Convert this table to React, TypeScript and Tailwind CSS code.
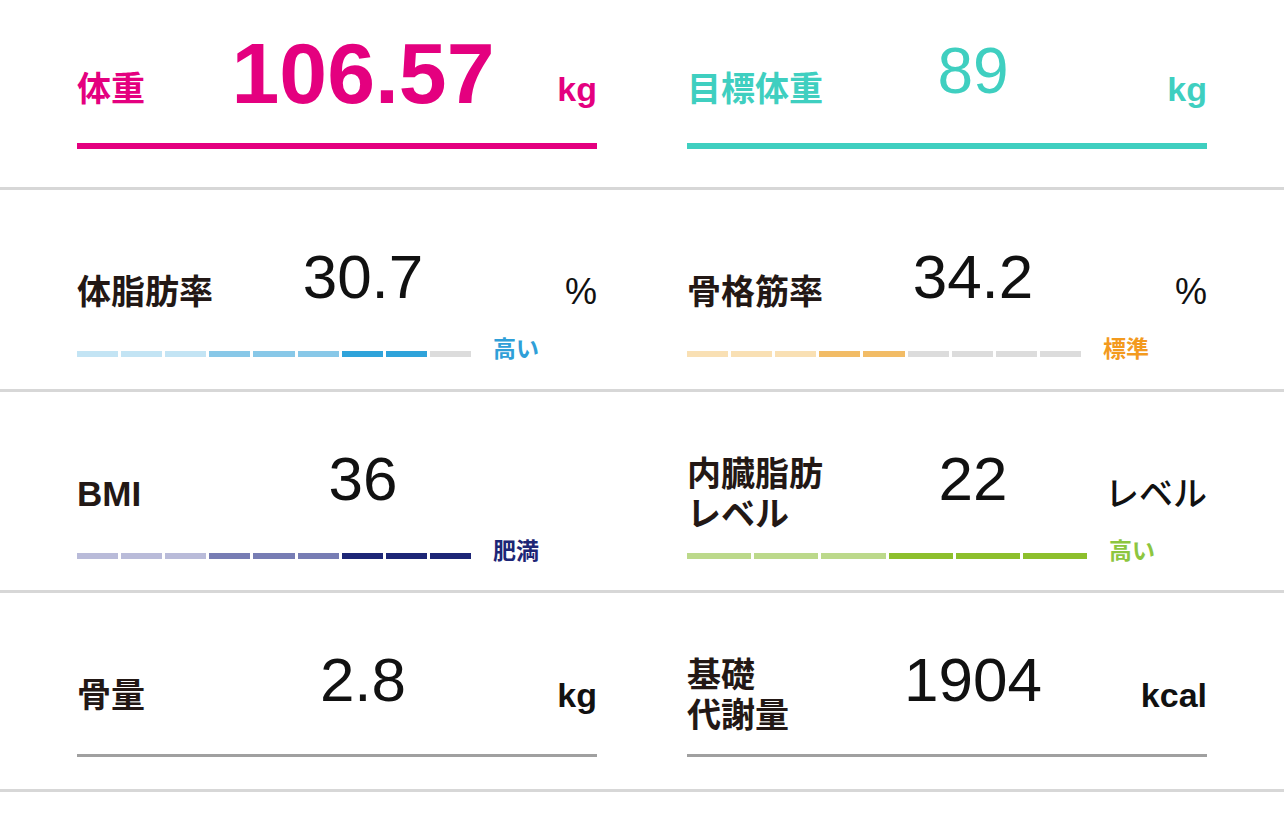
import React from "react"

type Seg = { color: string; n: number }

const LIGHT_GRAY = "bg-[#dcdcdc]"

const Header = ({
  label,
  value,
  unit,
  valueClass,
  labelClass = "text-[#231815]",
  unitClass = "text-[#111] font-bold",
}: {
  label: React.ReactNode
  value: string
  unit: string
  valueClass: string
  labelClass?: string
  unitClass?: string
}) => (
  <div className="grid grid-cols-[160px_minmax(0,1fr)_108px] items-center h-[80px]">
    <div className={`text-[34px] leading-[40px] font-bold whitespace-nowrap ${labelClass}`}>{label}</div>
    <div className={`flex justify-center leading-none whitespace-nowrap ${valueClass}`}>{value}</div>
    <div className={`text-right leading-none whitespace-nowrap ${unitClass}`}>{unit}</div>
  </div>
)

const SegBar = ({
  segs,
  width,
  status,
  statusColor,
}: {
  segs: Seg[]
  width: string
  status: string
  statusColor: string
}) => (
  <div className="mt-[11px] flex items-center gap-[22px] h-[22px]">
    <div className={`flex gap-[3px] h-[6px] ${width}`}>
      {segs.flatMap((s, i) =>
        Array.from({ length: s.n }).map((_, j) => (
          <div key={`${i}-${j}`} className={`flex-1 h-full ${s.color}`} />
        ))
      )}
    </div>
    <div className={`-mt-[10px] text-[23px] leading-none font-bold ${statusColor}`}>{status}</div>
  </div>
)

const Row = ({ h, children }: { h: string; children: React.ReactNode }) => (
  <div className={`${h} border-b-[3px] border-[#d7d7d7] px-[77px] grid grid-cols-2 gap-x-[90px]`}>
    {children}
  </div>
)

const VALUE = "-mt-[30px] text-[62px] text-[#111]"
const PCT = "text-[36px] text-[#111]"

export default function App() {
  return (
    <div className="w-[1284px] h-[823px] bg-white font-['Liberation_Sans','Noto_Sans_CJK_JP',sans-serif]">
      {/* 体重 / 目標体重 */}
      <Row h="h-[190px]">
        <div className="pt-[49px] flex flex-col">
          <Header
            label="体重"
            labelClass="text-[#e4007f]"
            value="106.57"
            valueClass="-mt-[32px] text-[86px] font-bold text-[#e4007f]"
            unit="kg"
            unitClass="text-[34px] font-bold text-[#e4007f]"
          />
          <div className="mt-[14px] h-[6px] bg-[#e4007f]" />
        </div>
        <div className="pt-[49px] flex flex-col">
          <Header
            label="目標体重"
            labelClass="text-[#3fcfc0]"
            value="89"
            valueClass="-mt-[37px] text-[64px] text-[#3fcfc0]"
            unit="kg"
            unitClass="text-[34px] font-bold text-[#3fcfc0]"
          />
          <div className="mt-[14px] h-[6px] bg-[#3fcfc0]" />
        </div>
      </Row>

      {/* 体脂肪率 / 骨格筋率 */}
      <Row h="h-[202px]">
        <div className="pt-[62px] flex flex-col">
          <Header label="体脂肪率" value="30.7" valueClass={VALUE} unit="%" unitClass={PCT} />
          <SegBar
            width="w-[394px]"
            segs={[
              { color: "bg-[#c3e4f4]", n: 3 },
              { color: "bg-[#88c8e8]", n: 3 },
              { color: "bg-[#2fa3da]", n: 2 },
              { color: LIGHT_GRAY, n: 1 },
            ]}
            status="高い"
            statusColor="text-[#2f9fd8]"
          />
        </div>
        <div className="pt-[62px] flex flex-col">
          <Header label="骨格筋率" value="34.2" valueClass={VALUE} unit="%" unitClass={PCT} />
          <SegBar
            width="w-[394px]"
            segs={[
              { color: "bg-[#f9e0b4]", n: 3 },
              { color: "bg-[#f2bc66]", n: 2 },
              { color: LIGHT_GRAY, n: 4 },
            ]}
            status="標準"
            statusColor="text-[#f39a1e]"
          />
        </div>
      </Row>

      {/* BMI / 内臓脂肪レベル */}
      <Row h="h-[201px]">
        <div className="pt-[62px] flex flex-col">
          <Header label="BMI" labelClass="text-[#231815] text-[35px]" value="36" valueClass={VALUE} unit="" />
          <SegBar
            width="w-[394px]"
            segs={[
              { color: "bg-[#b9bbd9]", n: 3 },
              { color: "bg-[#777db4]", n: 3 },
              { color: "bg-[#1d2676]", n: 3 },
            ]}
            status="肥満"
            statusColor="text-[#1d2676]"
          />
        </div>
        <div className="pt-[62px] flex flex-col">
          <Header
            label={
              <>
                内臓脂肪
                <br />
                レベル
              </>
            }
            value="22"
            valueClass={VALUE}
            unit="レベル"
            unitClass="text-[34px] font-medium text-[#111]"
          />
          <SegBar
            width="w-[400px]"
            segs={[
              { color: "bg-[#bcd98b]", n: 3 },
              { color: "bg-[#8dbf2c]", n: 3 },
            ]}
            status="高い"
            statusColor="text-[#8dc63f]"
          />
        </div>
      </Row>

      {/* 骨量 / 基礎代謝量 */}
      <Row h="h-[199px]">
        <div className="pt-[62px] flex flex-col">
          <Header label="骨量" value="2.8" valueClass={VALUE} unit="kg" unitClass="text-[34px] font-bold text-[#111]" />
          <div className="mt-[19px] h-[3px] bg-[#a0a0a0]" />
        </div>
        <div className="pt-[62px] flex flex-col">
          <Header
            label={
              <>
                基礎
                <br />
                代謝量
              </>
            }
            value="1904"
            valueClass={VALUE}
            unit="kcal"
            unitClass="text-[34px] font-bold text-[#111]"
          />
          <div className="mt-[19px] h-[3px] bg-[#a0a0a0]" />
        </div>
      </Row>
    </div>
  )
}
